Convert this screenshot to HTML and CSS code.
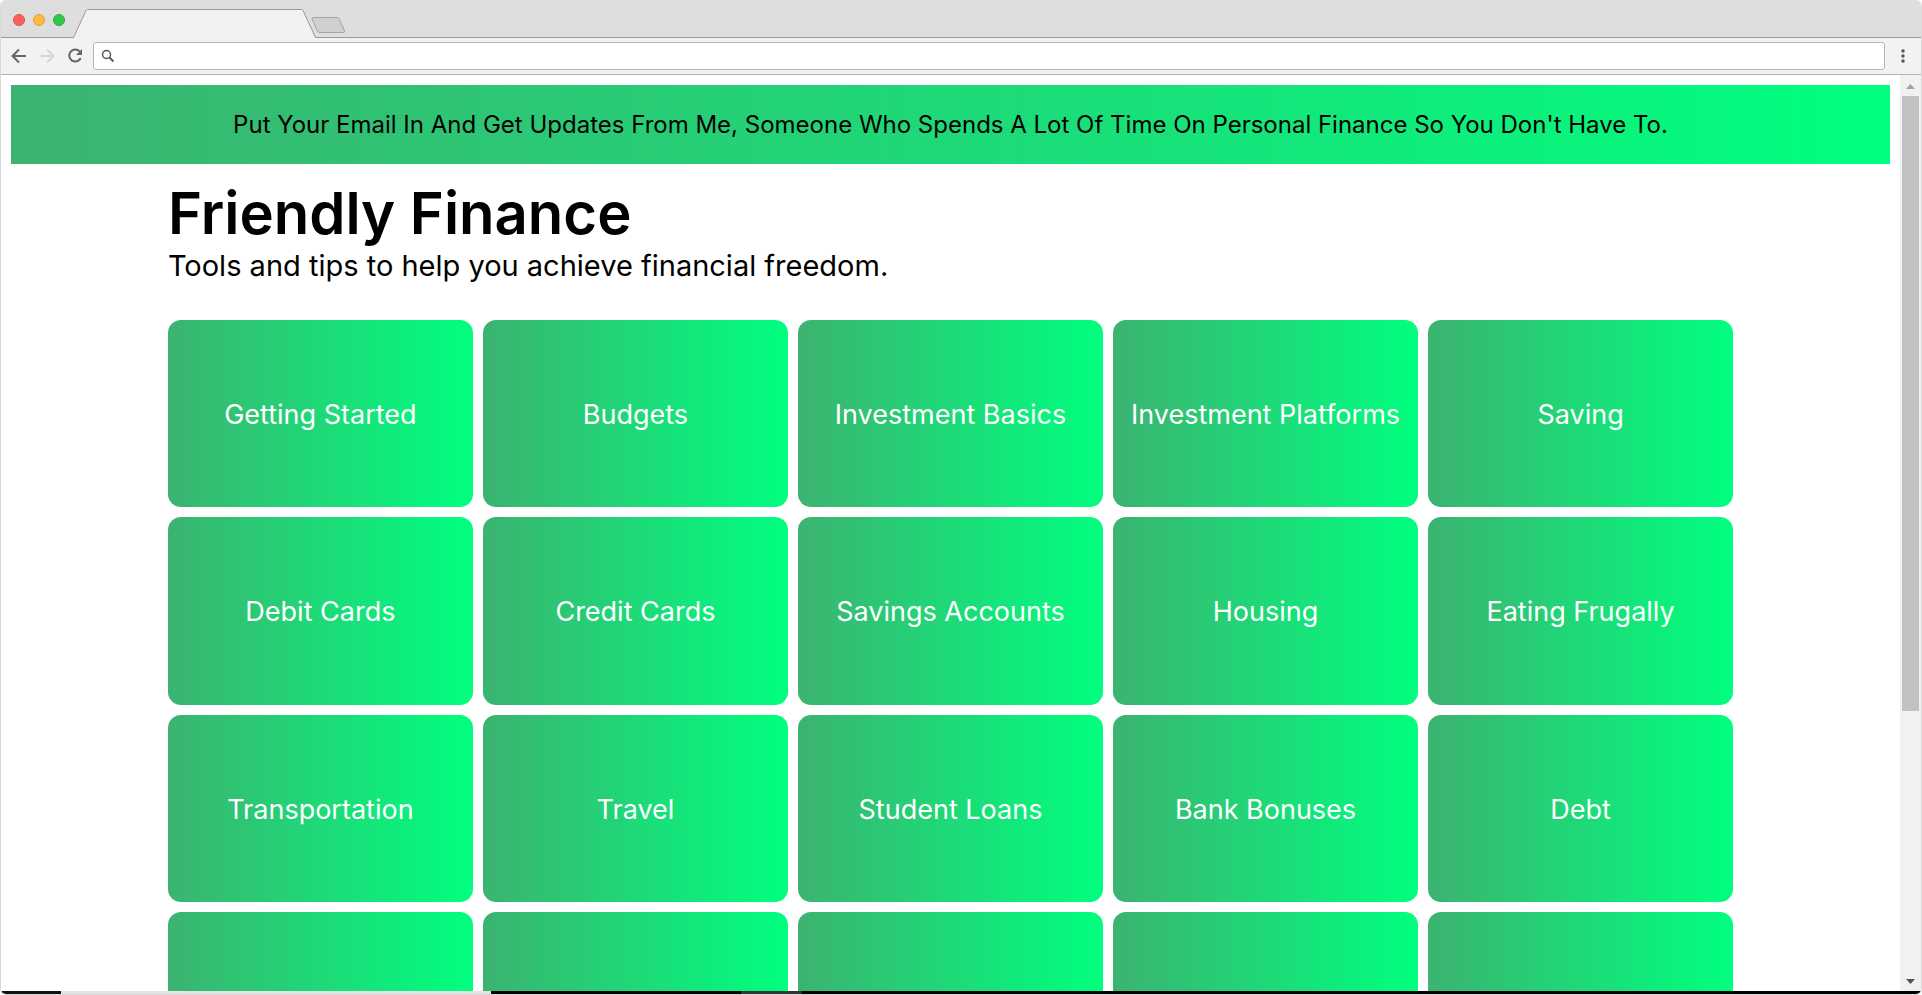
FILE: index.html
```
<!DOCTYPE html>
<html lang="en">
<head>
<meta charset="utf-8">
<title>Friendly Finance</title>
<link rel="stylesheet" href="styles.css">
</head>
<body>
<div class="window">
  <header class="tabstrip">
    <div class="lights">
      <button class="light light-close" aria-label="Close"></button>
      <button class="light light-min" aria-label="Minimize"></button>
      <button class="light light-max" aria-label="Maximize"></button>
    </div>
    <svg class="tabs" width="300" height="38" viewBox="0 0 300 38" aria-hidden="true">
      <path d="M0 37.5H4.500L17 10.500Q17.500 9.500 18.500 9.500H232.500Q233.500 9.500 234 10.500L246.500 37.500V38H4.500Z" fill="#f2f2f2"/>
      <path d="M0 37.500H4.500L17 10.500Q17.500 9.500 18.500 9.500H232.500Q233.500 9.500 234 10.500L246.500 37.500H300" fill="none" stroke="#999"/>
      <path d="M245 17.500H268Q269.500 17.500 270 18.500L275.500 31Q276 32.500 274.500 32.500H251Q249 32.500 248.500 31L243 19Q242.500 17.500 245 17.500Z" fill="#d0d0d0" stroke="#a3a3a3"/>
    </svg>
  </header>
  <nav class="toolbar">
    <button class="tool" aria-label="Back"><svg width="16" height="16" viewBox="0 0 16 16"><path d="M15 8H2M8 1.500L1.500 8L8 14.500" fill="none" stroke="#666" stroke-width="2"/></svg></button>
    <button class="tool" aria-label="Forward"><svg width="16" height="16" viewBox="0 0 16 16"><path d="M1 8H14M8 1.500L14.500 8L8 14.500" fill="none" stroke="#d6d6d6" stroke-width="2"/></svg></button>
    <button class="tool" aria-label="Reload"><svg width="16" height="16" viewBox="0 0 16 16"><path d="M12.800 3.600A6 6 0 1 0 13.700 10" fill="none" stroke="#666" stroke-width="2"/><path d="M15 1V7H9Z" fill="#666"/></svg></button>
    <label class="address">
      <svg width="14" height="14" viewBox="0 0 14 14" aria-hidden="true"><circle cx="5.500" cy="5.500" r="4" fill="none" stroke="#555" stroke-width="1.500"/><path d="M8.500 8.500L12.500 12.500" stroke="#555" stroke-width="1.800"/></svg>
      <input class="address-input" type="text" aria-label="Address">
    </label>
    <button class="menu" aria-label="Menu"><svg width="4" height="14" viewBox="0 0 4 14"><g fill="#555"><circle cx="2" cy="2" r="1.700"/><circle cx="2" cy="7" r="1.700"/><circle cx="2" cy="12" r="1.700"/></g></svg></button>
  </nav>
  <div class="viewport">
    <main class="page">
      <p class="banner">Put Your Email In And Get Updates From Me, Someone Who Spends A Lot Of Time On Personal Finance So You Don't Have To.</p>
      <div class="content">
        <h1 class="title">Friendly Finance</h1>
        <p class="subtitle">Tools and tips to help you achieve financial freedom.</p>
        <div class="grid">
          <a class="card" href="#">Getting Started</a>
          <a class="card" href="#">Budgets</a>
          <a class="card" href="#">Investment Basics</a>
          <a class="card" href="#">Investment Platforms</a>
          <a class="card" href="#">Saving</a>
          <a class="card" href="#">Debit Cards</a>
          <a class="card" href="#">Credit Cards</a>
          <a class="card" href="#">Savings Accounts</a>
          <a class="card" href="#">Housing</a>
          <a class="card" href="#">Eating Frugally</a>
          <a class="card" href="#">Transportation</a>
          <a class="card" href="#">Travel</a>
          <a class="card" href="#">Student Loans</a>
          <a class="card" href="#">Bank Bonuses</a>
          <a class="card" href="#">Debt</a>
          <a class="card" href="#"></a>
          <a class="card" href="#"></a>
          <a class="card" href="#"></a>
          <a class="card" href="#"></a>
          <a class="card" href="#"></a>
        </div>
      </div>
    </main>
    <div class="scrollbar">
      <svg class="arrow" width="9" height="5" viewBox="0 0 9 5"><path d="M0 5L4.500 0L9 5Z" fill="#a3a3a3"/></svg>
      <div class="track"><div class="thumb"></div></div>
      <svg class="arrow" width="9" height="5" viewBox="0 0 9 5"><path d="M0 0L4.500 5L9 0Z" fill="#505050"/></svg>
    </div>
  </div>
  <footer class="taskbar"></footer>
</div>
</body>
</html>
```
FILE: styles.css
```
* { box-sizing: border-box; }
body { margin: 0; background: #fff; font-family: Inter, Roboto, sans-serif; }
button { border: 0; padding: 0; background: none; }
svg { display: block; }

.window {
  display: flex;
  flex-direction: column;
  height: 100vh;
  border: 1px solid #d9d9d9;
  border-top: 0;
  border-radius: 6px;
  overflow: hidden;
}

.tabstrip {
  display: flex;
  flex: none;
  height: 38px;
  background: linear-gradient(#999, #999) bottom / 100% 1px no-repeat #dedede;
}
.lights { display: flex; gap: 8px; padding: 14px 0 0 12px; width: 68px; }
.light { width: 12px; height: 12px; border-radius: 50%; }
.light-close { background: #fc615d; border: 1px solid #e0504c; }
.light-min { background: #fdbc40; border: 1px solid #dfa033; }
.light-max { background: #34c749; border: 1px solid #2aae3c; }

.toolbar {
  display: flex;
  flex: none;
  align-items: center;
  height: 37px;
  padding: 0 16px 0 10px;
  background: #f2f2f2;
  border-bottom: 1px solid #b4b4b4;
}
.tool { flex: none; width: 28px; }
.tool:nth-child(3) { width: 26px; }
.address {
  display: flex;
  flex: 1;
  align-items: center;
  height: 28px;
  margin-right: 16px;
  padding-left: 7px;
  background: #fff;
  border: 1px solid #b6b6b6;
  border-radius: 3px;
}
.tool svg { margin: 0 auto 0 6px; }
.tool:nth-child(n) svg { margin: 0; }
.address-input { flex: 1; border: 0; outline: 0; background: transparent; }

.viewport { display: flex; flex: 1; min-height: 0; background: #fff; }
.page { flex: 1; padding: 10px; overflow: hidden; }
.banner {
  margin: 0;
  padding: 24px;
  font-size: 24px;
  line-height: 31px;
  text-align: center;
  background: linear-gradient(to right, mediumseagreen, springgreen);
}
.content { width: 83.3%; margin: 0 auto; }
.title { margin: 0; padding-top: 14px; font-size: 58px; font-weight: 600; line-height: 70px; }
.subtitle { margin: 0; font-size: 29px; line-height: 36px; }
.grid {
  display: grid;
  grid-template-columns: repeat(5, 1fr);
  gap: 10px;
  margin-top: 36px;
}
.card {
  display: flex;
  align-items: center;
  justify-content: center;
  aspect-ratio: 57 / 35;
  padding-top: 2px;
  color: #fff;
  font-size: 27px;
  text-decoration: none;
  white-space: nowrap;
  border-radius: 13px;
  background: linear-gradient(to right, mediumseagreen, springgreen);
}

.scrollbar {
  display: flex;
  flex: none;
  flex-direction: column;
  align-items: center;
  width: 21px;
  padding: 9px 2px 7px;
  background: #f1f1f1;
}
.track { flex: 1; width: 17px; padding: 7px 0 10px; }
.thumb { height: 70.5%; background: #c1c1c1; }

.taskbar {
  flex: none;
  height: 3px;
  background: linear-gradient(to right, #111 60px, #e4e4e4 60px 490px, #000 490px 740px, #333 740px 801px, #000 801px);
}
```
